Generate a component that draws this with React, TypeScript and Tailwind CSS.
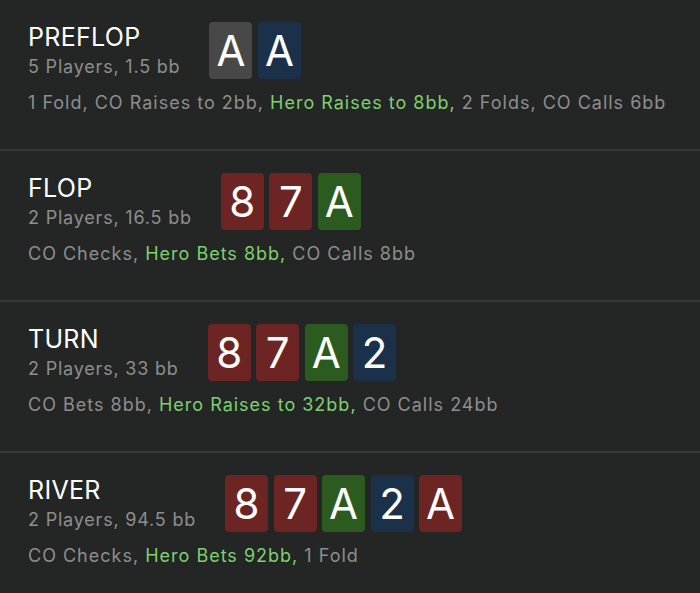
import React from 'react';

type Suit = 'grey' | 'blue' | 'red' | 'green';

interface Street {
  name: string;
  info: string;
  cards: { rank: string; suit: Suit }[];
  before: string;
  hero: string;
  after: string;
}

const SUIT_BG: Record<Suit, string> = {
  grey: 'bg-[#484848]',
  blue: 'bg-[#1b3049]',
  red: 'bg-[#6c2522]',
  green: 'bg-[#2c5b20]',
};

const STREETS: Street[] = [
  {
    name: 'PREFLOP',
    info: '5 Players, 1.5 bb',
    cards: [
      { rank: 'A', suit: 'grey' },
      { rank: 'A', suit: 'blue' },
    ],
    before: '1 Fold, CO Raises to 2bb, ',
    hero: 'Hero Raises to 8bb,',
    after: ' 2 Folds, CO Calls 6bb',
  },
  {
    name: 'FLOP',
    info: '2 Players, 16.5 bb',
    cards: [
      { rank: '8', suit: 'red' },
      { rank: '7', suit: 'red' },
      { rank: 'A', suit: 'green' },
    ],
    before: 'CO Checks, ',
    hero: 'Hero Bets 8bb,',
    after: ' CO Calls 8bb',
  },
  {
    name: 'TURN',
    info: '2 Players, 33 bb',
    cards: [
      { rank: '8', suit: 'red' },
      { rank: '7', suit: 'red' },
      { rank: 'A', suit: 'green' },
      { rank: '2', suit: 'blue' },
    ],
    before: 'CO Bets 8bb, ',
    hero: 'Hero Raises to 32bb,',
    after: ' CO Calls 24bb',
  },
  {
    name: 'RIVER',
    info: '2 Players, 94.5 bb',
    cards: [
      { rank: '8', suit: 'red' },
      { rank: '7', suit: 'red' },
      { rank: 'A', suit: 'green' },
      { rank: '2', suit: 'blue' },
      { rank: 'A', suit: 'red' },
    ],
    before: 'CO Checks, ',
    hero: 'Hero Bets 92bb,',
    after: ' 1 Fold',
  },
];

function Card({ rank, suit }: { rank: string; suit: Suit }) {
  return (
    <div className={`w-[43px] h-[57px] rounded-[4px] flex items-center justify-center text-white text-[42px] leading-none ${SUIT_BG[suit]}`}>
      {rank}
    </div>
  );
}

function StreetRow({ street, last }: { street: Street; last: boolean }) {
  return (
    <section className={`pl-[28px] pt-[22px] h-[151px] ${last ? '' : 'border-b-2 border-[#363937]'}`}>
      <div className="flex items-start gap-[29px]">
        <div>
          <div className="text-white text-[25px] leading-[30px] tracking-[0.3px]">{street.name}</div>
          <div className="mt-[4px] text-[#8e8e8e] text-[18px] leading-[22px] tracking-[0.8px]">{street.info}</div>
        </div>
        <div className="flex gap-[5.5px]">
          {street.cards.map((c, i) => (
            <Card key={i} rank={c.rank} suit={c.suit} />
          ))}
        </div>
      </div>
      <div className="mt-[13px] text-[18px] leading-[22px] tracking-[1px] text-[#8e8e8e] whitespace-nowrap">
        {street.before}
        <span className="text-[#7fd06f]">{street.hero}</span>
        {street.after}
      </div>
    </section>
  );
}

export default function App() {
  return (
    <div className="w-[700px] h-[593px] overflow-hidden bg-[#232624] font-['Inter','Noto_Sans',sans-serif]">
      {STREETS.map((s, i) => (
        <StreetRow key={s.name} street={s} last={i === STREETS.length - 1} />
      ))}
    </div>
  );
}
